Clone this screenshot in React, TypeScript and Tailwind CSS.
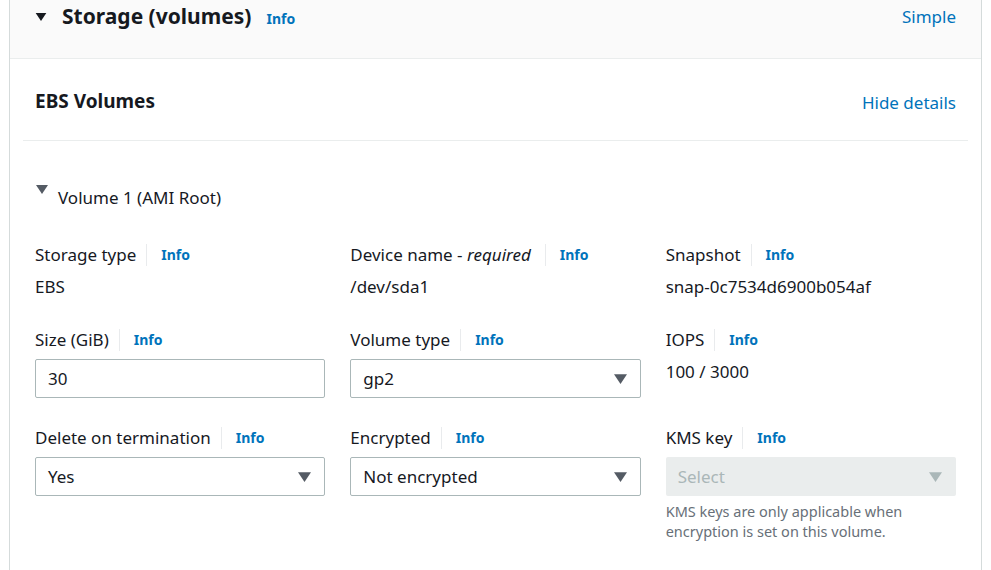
import type { ReactNode } from 'react';

function Caret({ className }: { className?: string }) {
  return (
    <svg viewBox="0 0 12 9" className={className} aria-hidden="true">
      <path d="M0 0h12L6 9z" fill="currentColor" />
    </svg>
  );
}

function Label({ children }: { children: ReactNode }) {
  return (
    <div className="flex items-center h-[22px] leading-[22px]">
      <span className="text-[17px] text-[#16191f]">{children}</span>
      <span className="ml-[10px] h-[22px] border-l border-[#e9ebed]" />
      <span className="ml-[14px] text-[14px] font-bold text-[#0073bb]">Info</span>
    </div>
  );
}

function Value({ children }: { children: ReactNode }) {
  return <div className="mt-[10px] h-[22px] leading-[22px] text-[17px] text-[#16191f]">{children}</div>;
}

function SelectBox({ value, disabled }: { value: string; disabled?: boolean }) {
  return (
    <div
      className={
        disabled
          ? 'mt-2 flex h-[39px] items-center justify-between rounded-[2px] bg-[#eaeded] pl-3 pr-[14px]'
          : 'mt-2 flex h-[39px] items-center justify-between rounded-[2px] border border-[#aab7b8] bg-white pl-3 pr-[13px]'
      }
    >
      <span className={disabled ? 'text-[17px] text-[#aab7b8]' : 'text-[17px] text-[#16191f]'}>{value}</span>
      <Caret className={disabled ? 'w-[13px] h-[10px] text-[#aab7b8]' : 'w-[13px] h-[10px] text-[#545b64]'} />
    </div>
  );
}

function App() {
  return (
    <div
      className="min-h-[570px] w-full bg-white px-[9px]"
      style={{ fontFamily: '"Noto Sans", "Open Sans", Arial, sans-serif' }}
    >
      <div className="min-h-[570px] border-x border-[#d5dbdb]">
        <div className="h-[59px] border-b border-[#eaeded] bg-[#fafafa]">
          <div className="flex h-[34px] items-center justify-between pl-[25px] pr-[25px]">
            <div className="flex items-center">
              <Caret className="w-[12px] h-[8px] text-[#16191f]" />
              <h2 className="ml-[15px] text-[21px] font-bold text-[#16191f]">Storage (volumes)</h2>
              <span className="ml-[15px] mt-[3px] text-[14px] font-bold text-[#0073bb]">Info</span>
            </div>
            <span className="text-[17px] text-[#0073bb]">Simple</span>
          </div>
        </div>

        <div className="mx-[13px]">
          <div className="flex h-[82px] items-center justify-between border-b border-[#eaeded] px-3 pt-[4px]">
            <h3 className="text-[19px] font-bold text-[#16191f]">EBS Volumes</h3>
            <span className="mt-[2px] text-[17px] text-[#0073bb]">Hide details</span>
          </div>

          <div className="px-3">
            <div className="mt-[44px] flex items-start">
              <Caret className="ml-[1px] w-[12px] h-[9px] text-[#545b64]" />
              <span className="ml-[10px] mt-[2px] text-[17px] leading-[22px] text-[#16191f]">Volume 1 (AMI Root)</span>
            </div>

            <div className="mt-[35px] grid grid-cols-3 gap-x-[25px]">
              <div>
                <Label>Storage type</Label>
                <Value>EBS</Value>
              </div>
              <div>
                <div className="flex items-center h-[22px] leading-[22px]">
                  <span className="text-[17px] text-[#16191f]">
                    Device name - <i>required</i>
                  </span>
                  <span className="ml-[14px] h-[22px] border-l border-[#e9ebed]" />
                  <span className="ml-[14px] text-[14px] font-bold text-[#0073bb]">Info</span>
                </div>
                <Value>/dev/sda1</Value>
              </div>
              <div>
                <Label>Snapshot</Label>
                <Value>snap-0c7534d6900b054af</Value>
              </div>
            </div>

            <div className="mt-[31px] grid grid-cols-3 gap-x-[25px]">
              <div>
                <Label>Size (GiB)</Label>
                <div className="mt-2 flex h-[39px] items-center rounded-[2px] border border-[#aab7b8] bg-white pl-3">
                  <span className="text-[17px] text-[#16191f]">30</span>
                </div>
              </div>
              <div>
                <Label>Volume type</Label>
                <SelectBox value="gp2" />
              </div>
              <div>
                <Label>IOPS</Label>
                <Value>100 / 3000</Value>
              </div>
            </div>

            <div className="mt-[29px] grid grid-cols-3 gap-x-[25px]">
              <div>
                <Label>Delete on termination</Label>
                <SelectBox value="Yes" />
              </div>
              <div>
                <Label>Encrypted</Label>
                <SelectBox value="Not encrypted" />
              </div>
              <div>
                <Label>KMS key</Label>
                <SelectBox value="Select" disabled />
                <p className="mt-[5px] text-[14.5px] leading-[20px] text-[#687078]">
                  KMS keys are only applicable when
                  <br />
                  encryption is set on this volume.
                </p>
              </div>
            </div>
          </div>
        </div>
      </div>
    </div>
  );
}

export default App;
